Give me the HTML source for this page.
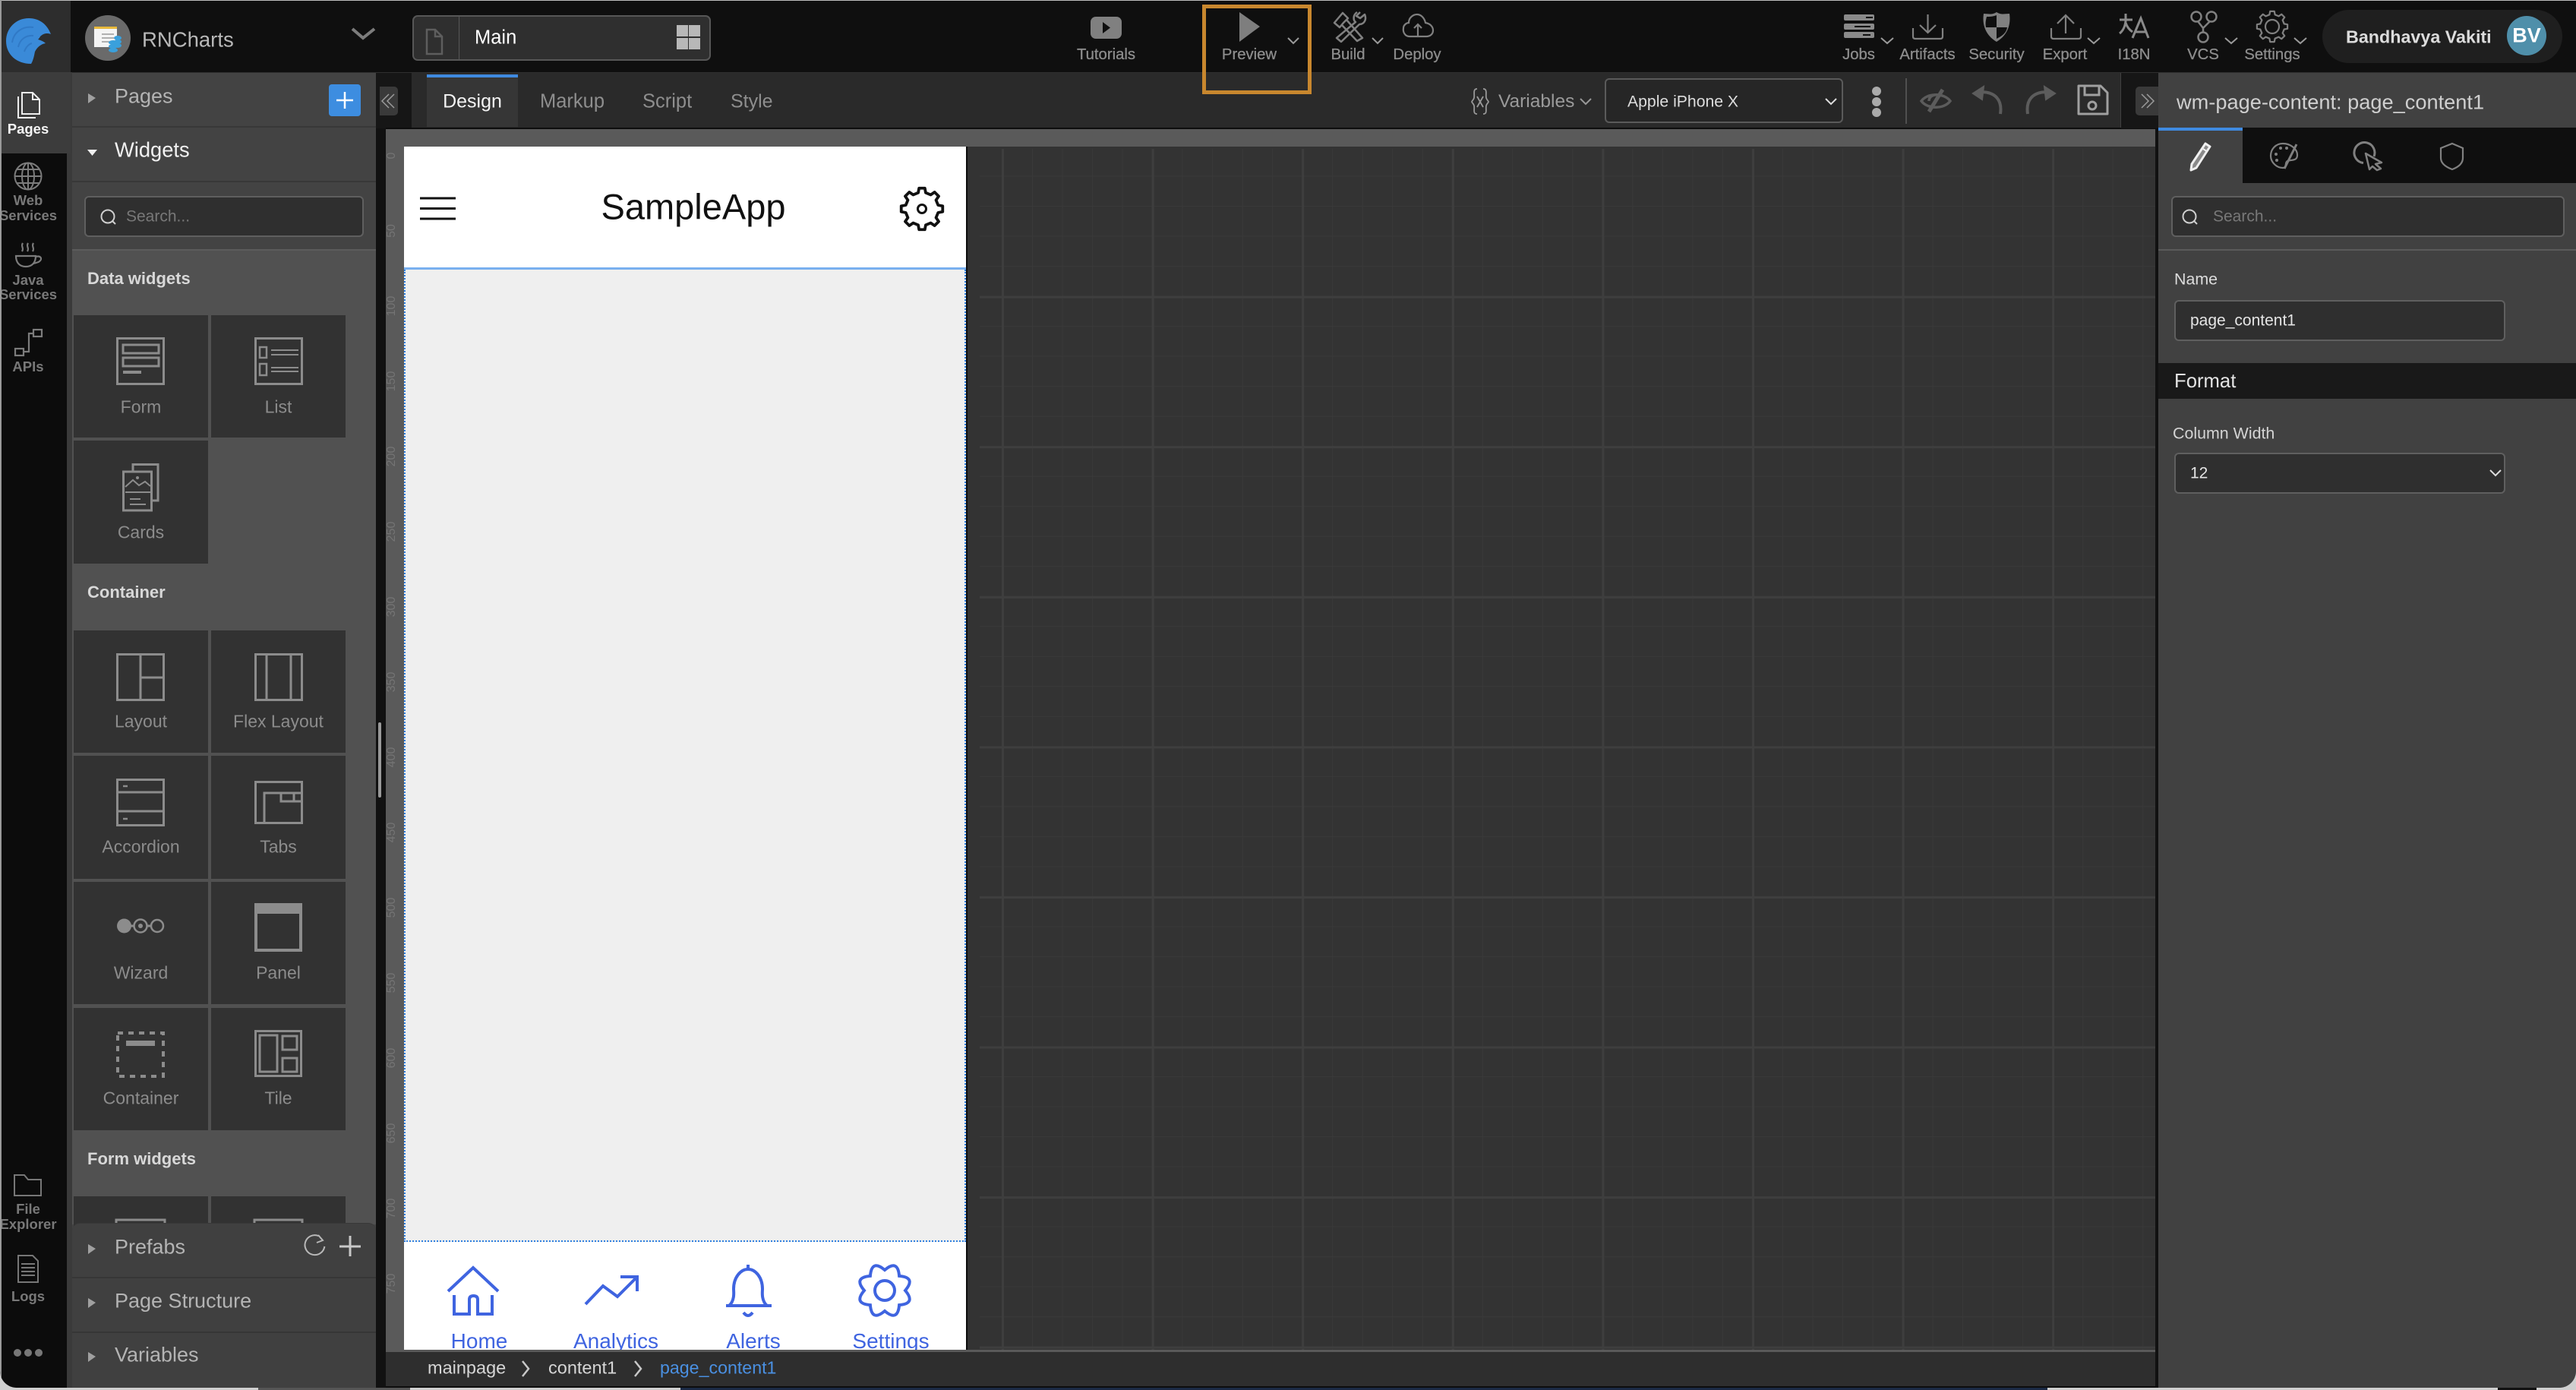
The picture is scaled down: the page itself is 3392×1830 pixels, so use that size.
<!DOCTYPE html>
<html><head><meta charset="utf-8"><title>RNCharts</title>
<style>
html,body{margin:0;padding:0;width:3392px;height:1830px;overflow:hidden;background:#cfcfcf;font-family:"Liberation Sans","Noto Sans CJK SC",sans-serif}
#root{position:absolute;left:0;top:0;width:3392px;height:1827px;overflow:hidden;background:#414141;border-radius:0 0 22px 22px}
.a{position:absolute}
.t,.c,.r{position:absolute;white-space:nowrap;line-height:1}
.t{transform:translateY(-50%)}
.c{transform:translate(-50%,-50%)}
.r{left:516px;font-size:16px;color:#747474;transform:translate(-50%,-50%) rotate(-90deg)}
.tile{position:absolute;background:#323232;width:177px}
.wl{font-size:23px;color:#8c8c8c}
.sh{font-size:22px;font-weight:bold;color:#d8d8d8;left:115px}
.tool{font-size:20.3px;color:#8c8c8c;-webkit-text-stroke:.3px #8c8c8c}
.rail{font-size:18.5px;font-weight:bold;color:#787878;left:37px}
.acc{font-size:27px;color:#b4b4b4;left:151px}
.nav{font-size:28px;color:#3f64e0}
svg{position:absolute;left:0;top:0}
</style></head><body>
<div id="root">
<!-- top bar -->
<div class="a" style="left:0;top:0;width:3392px;height:96px;background:#0f0f0f"></div>
<div class="a" style="left:0;top:0;width:93px;height:95px;background:#2d2d2d"></div>
<div class="a" style="left:0;top:95px;width:3392px;height:1px;background:#2f2f2f"></div>
<!-- rail -->
<div class="a" style="left:0;top:95px;width:88px;height:1732px;background:#0c0c0c"></div>
<div class="a" style="left:88px;top:95px;width:7px;height:1732px;background:#3a3a3a"></div>
<div class="a" style="left:0;top:95px;width:93px;height:107px;background:#3c3c3c"></div>
<!-- left panel -->
<div class="a" style="left:95px;top:96px;width:400px;height:1731px;background:#434343"></div>
<div class="a" style="left:95px;top:166px;width:400px;height:2px;background:#383838"></div>
<div class="a" style="left:95px;top:238px;width:400px;height:2px;background:#383838"></div>
<div class="a" style="left:95px;top:328px;width:400px;height:2px;background:#5c5c5c"></div>
<div class="a" style="left:95px;top:330px;width:400px;height:1282px;background:#515151"></div>
<div class="a" style="left:111px;top:258px;width:364px;height:50px;background:#2f2f2f;border:2px solid #5f5f5f;border-radius:6px"></div>
<div class="tile" style="left:97px;top:415px;height:161px"></div>
<div class="tile" style="left:278px;top:415px;height:161px"></div>
<div class="tile" style="left:97px;top:580px;height:162px"></div>
<div class="tile" style="left:97px;top:830px;height:161px"></div>
<div class="tile" style="left:278px;top:830px;height:161px"></div>
<div class="tile" style="left:97px;top:995px;height:162px"></div>
<div class="tile" style="left:278px;top:995px;height:162px"></div>
<div class="tile" style="left:97px;top:1161px;height:161px"></div>
<div class="tile" style="left:278px;top:1161px;height:161px"></div>
<div class="tile" style="left:97px;top:1327px;height:161px"></div>
<div class="tile" style="left:278px;top:1327px;height:161px"></div>
<div class="tile" style="left:97px;top:1575px;height:40px"></div>
<div class="tile" style="left:278px;top:1575px;height:40px"></div>
<div class="a" style="left:498px;top:951px;width:4px;height:99px;background:#999;border-radius:2px;z-index:3"></div>
<!-- bottom accordions -->
<div class="a" style="left:95px;top:1610px;width:400px;height:217px;background:#404040;border-radius:10px 10px 0 0;border-top:1px solid #383838;z-index:1"></div>
<div class="a" style="left:95px;top:1681px;width:400px;height:2px;background:#363636;z-index:1"></div>
<div class="a" style="left:95px;top:1753px;width:400px;height:2px;background:#363636;z-index:1"></div>
<!-- gutter -->
<div class="a" style="left:495px;top:96px;width:13px;height:1731px;background:#111"></div>
<div class="a" style="left:495px;top:96px;width:47px;height:73px;background:#161616"></div>
<!-- design toolbar -->
<div class="a" style="left:542px;top:96px;width:2250px;height:73px;background:#2a2a2a"></div>
<div class="a" style="left:508px;top:168px;width:2334px;height:2px;background:#0d0d0d"></div>
<div class="a" style="left:562px;top:98px;width:120px;height:69px;background:#363636"></div>
<div class="a" style="left:562px;top:98px;width:120px;height:4px;background:#3f8ae0"></div>
<div class="a" style="left:2793px;top:96px;width:49px;height:73px;background:#161616"></div>
<div class="a" style="left:500px;top:114px;width:24px;height:38px;background:#3a3a3a;border-radius:0 5px 5px 0"></div>
<div class="a" style="left:2812px;top:114px;width:30px;height:38px;background:#3a3a3a;border-radius:5px 0 0 5px"></div>
<!-- pill -->
<div class="a" style="left:543px;top:20px;width:389px;height:56px;background:#2f2f2f;border:2px solid #575757;border-radius:7px"></div>
<div class="a" style="left:604px;top:22px;width:1px;height:56px;background:#575757"></div>
<!-- select -->
<div class="a" style="left:2113px;top:103px;width:310px;height:55px;background:#262626;border:2px solid #5a5a5a;border-radius:6px"></div>
<div class="a" style="left:2509px;top:103px;width:2px;height:60px;background:#505050"></div>
<!-- canvas -->
<div class="a" style="left:508px;top:170px;width:2330px;height:23px;background:#5a5a5a"></div>
<div class="a" style="left:508px;top:170px;width:24px;height:1608px;background:#5a5a5a"></div>
<div class="a" style="left:1272px;top:193px;width:1566px;height:1585px;background-color:#333;background-image:linear-gradient(to right,#3e3e3e 3px,transparent 3px),linear-gradient(to bottom,#3e3e3e 3px,transparent 3px),linear-gradient(to right,#393939 1px,transparent 1px),linear-gradient(to bottom,#393939 1px,transparent 1px);background-size:197.6px 197.6px,197.6px 197.6px,39.52px 39.52px,39.52px 39.52px;background-position:47px 0,0 -1px,8px 0,0 -1px"></div>
<div class="a" style="left:1272px;top:193px;width:18px;height:1585px;background:#333"></div>
<div class="a" style="left:1272px;top:193px;width:1566px;height:3px;background:#333"></div>
<div class="a" style="left:2838px;top:170px;width:4px;height:1657px;background:#111"></div>
<!-- phone -->
<div class="a" style="left:532px;top:193px;width:740px;height:1584px;background:#fff"></div>
<div class="a" style="left:1272px;top:193px;width:2px;height:1584px;background:#0c0c0c"></div>
<div class="a" style="left:532px;top:352px;width:740px;height:3px;background:#79b0ef"></div>
<div class="a" style="left:532px;top:355px;width:736px;height:1278px;background:#efefef;border-left:2px dotted #2f7fe0;border-right:2px dotted #2f7fe0;border-bottom:2px dotted #2f7fe0"></div>
<!-- breadcrumb -->
<div class="a" style="left:508px;top:1777px;width:2330px;height:3px;background:#5a5a5a"></div>
<div class="a" style="left:508px;top:1780px;width:2330px;height:46px;background:#2e2e2e"></div>
<div class="a" style="left:508px;top:1825px;width:2334px;height:2px;background:#0d0d0d"></div>
<!-- right panel -->
<div class="a" style="left:2842px;top:96px;width:550px;height:1731px;background:#414141"></div>
<div class="a" style="left:2842px;top:168px;width:550px;height:73px;background:#0f0f0f"></div>
<div class="a" style="left:2842px;top:168px;width:111px;height:73px;background:#414141"></div>
<div class="a" style="left:2842px;top:168px;width:111px;height:4px;background:#3f8ae0"></div>
<div class="a" style="left:2859px;top:258px;width:514px;height:50px;background:#2f2f2f;border:2px solid #5f5f5f;border-radius:6px"></div>
<div class="a" style="left:2842px;top:328px;width:550px;height:2px;background:#5a5a5a"></div>
<div class="a" style="left:2863px;top:395px;width:432px;height:50px;background:#2f2f2f;border:2px solid #5f5f5f;border-radius:6px"></div>
<div class="a" style="left:2842px;top:478px;width:550px;height:47px;background:#191919"></div>
<div class="a" style="left:2863px;top:596px;width:432px;height:50px;background:#2f2f2f;border:2px solid #5f5f5f;border-radius:6px"></div>
<!-- user pill -->
<div class="a" style="left:3058px;top:13px;width:316px;height:70px;background:#1f1f1f;border-radius:35px"></div>
<div class="a" style="left:3301px;top:21px;width:52px;height:52px;background:#4f8faa;border-radius:50%"></div>
<!-- edges -->
<div class="a" style="left:0;top:0;width:3392px;height:1px;background:#bdbdbd;z-index:5"></div>
<div class="a" style="left:0;top:0;width:2px;height:1827px;background:#9a9a9a;z-index:5"></div>

<!-- ICONS -->
<svg width="3392" height="1830" viewBox="0 0 3392 1830" fill="none" style="z-index:2">
<defs>
<polygon id="gear" points="22.4,-5.2 28.7,-4 28.7,4 22.4,5.2 19.5,12.2 23.2,17.5 17.5,23.2 12.2,19.5 5.2,22.4 4,28.7 -4,28.7 -5.2,22.4 -12.2,19.5 -17.5,23.2 -23.2,17.5 -19.5,12.2 -22.4,5.2 -28.7,4 -28.7,-4 -22.4,-5.2 -19.5,-12.2 -23.2,-17.5 -17.5,-23.2 -12.2,-19.5 -5.2,-22.4 -4,-28.7 4,-28.7 5.2,-22.4 12.2,-19.5 17.5,-23.2 23.2,-17.5 19.5,-12.2"/>
</defs>
<!-- logo -->
<path d="M38 24C52 24 62 32 67 45C62 43 57 44 53 48C52 50 51 51 50 52C54 53 58 55 60 57C54 58 49 62 46 68C45 73 44 79 41 84C22 84 8 72 8 54C8 37 21 24 38 24Z" fill="#3a8ad8"/>
<path d="M16 56C18 42 30 34 44 36M24 62C26 52 34 46 44 47M32 68C34 62 38 58 42 57" stroke="#3079c6" stroke-width="2"/>
<!-- app icon -->
<circle cx="142" cy="50" r="30" fill="#6a6a6a"/>
<rect x="124" y="35" width="30" height="27" fill="#f4f4f4"/>
<rect x="124" y="35" width="30" height="3" fill="#e8b93c"/>
<path d="M134 45h16M134 50h16M134 55h10" stroke="#999" stroke-width="1.5"/>
<g fill="#3aa0dc"><ellipse cx="149" cy="56" rx="6" ry="3"/><ellipse cx="149" cy="61" rx="6" ry="3"/><ellipse cx="149" cy="66" rx="6" ry="3"/><ellipse cx="155" cy="50" rx="5" ry="3"/><ellipse cx="155" cy="55" rx="5" ry="3"/><ellipse cx="155" cy="60" rx="5" ry="3"/></g>
<path d="M464 38L478 50L493 38" stroke="#7c7c7c" stroke-width="4"/>
<!-- rail icons -->
<path d="M29 122H43L52 131V150H29Z" stroke="#eee" stroke-width="2"/><path d="M43 122V131H52" stroke="#eee" stroke-width="2"/><path d="M24 127V155H47" stroke="#eee" stroke-width="2"/>
<g stroke="#7c7c7c" stroke-width="2"><circle cx="37" cy="232" r="17.5"/><ellipse cx="37" cy="232" rx="8" ry="17.5"/><path d="M19.5 232H54.5M22 223H52M22 241H52M37 214V250"/></g>
<g stroke="#7c7c7c" stroke-width="2.2"><path d="M21 337H47C47 346 42 351 34 351C26 351 21 346 21 337ZM47 338C54 336 56 341 52 344C50 346 46 346 44 347"/><path d="M30 320C27 325 32 326 29 331M37 320C34 325 39 326 36 331M44 320C41 325 46 326 43 331"/></g>
<g stroke="#7c7c7c" stroke-width="2.2"><rect x="20" y="459" width="11" height="9"/><rect x="44" y="434" width="11" height="9"/><path d="M31 463H38V439H44"/></g>
<path d="M19 1574V1547H32L37 1553H54V1574Z" stroke="#777" stroke-width="2"/>
<path d="M24 1653H43L50 1660V1688H24Z M28 1664H46M28 1669H46M28 1674H46M28 1679H46" stroke="#777" stroke-width="2"/>
<g fill="#777"><circle cx="23" cy="1781" r="5"/><circle cx="37" cy="1781" r="5"/><circle cx="51" cy="1781" r="5"/></g>
<!-- panel triangles -->
<g fill="#a0a0a0"><path d="M116 123L126 129L116 136Z"/><path d="M116 1638L126 1644L116 1651Z"/><path d="M116 1709L126 1715L116 1722Z"/><path d="M116 1780L126 1786L116 1793Z"/></g>
<path d="M115 197H128L121.5 205Z" fill="#f0f0f0"/>
<rect x="433" y="111" width="42" height="42" rx="4" fill="#3d8de0"/>
<path d="M443 132H465M454 121V143" stroke="#fff" stroke-width="2.5"/>
<g stroke="#cfcfcf" stroke-width="2"><circle cx="142" cy="285" r="8.5"/><path d="M148 291L152 295"/><circle cx="2883" cy="285" r="8.5"/><path d="M2889 291L2893 295"/></g>
<path d="M425 1632A13 13 0 1 0 425 1648" stroke="#b8b8b8" stroke-width="2" transform="rotate(-30 413 1640)"/>
<path d="M419 1626L425 1633L417 1636" stroke="#b8b8b8" stroke-width="2"/>
<path d="M447 1641H475M461 1627V1654" stroke="#c8c8c8" stroke-width="3"/>
<!-- chevrons left/right collapse -->
<path d="M512 124L503 133L512 142M519 124L510 133L519 142" stroke="#9a9a9a" stroke-width="1.5"/>
<path d="M2820 124L2829 133L2820 142M2827 124L2836 133L2827 142" stroke="#9a9a9a" stroke-width="1.5"/>
<!-- tiles -->
<g stroke="#8c8c8c" stroke-width="3" fill="none">
<g transform="translate(153 444)"><rect x="1.5" y="1.5" width="61" height="60"/><rect x="9" y="10" width="47" height="11"/><rect x="9" y="27" width="47" height="11"/><path d="M9 46H33" stroke-width="4"/></g>
<g transform="translate(335 444)"><rect x="1.5" y="1.5" width="61" height="60"/><rect x="7" y="13" width="9" height="14" stroke-width="2.5"/><rect x="7" y="35" width="9" height="15" stroke-width="2.5"/><path d="M22 17H58M22 23H58M22 40H58M22 45H58" stroke-width="2"/></g>
<g transform="translate(161 610)"><path d="M14 11V1.5H47V49H38"/><rect x="1.5" y="11" width="37" height="51"/><path d="M4 38H37M4 31L14 22L22 29L30 24L37 30" stroke-width="2"/><path d="M10 47H24M10 54H31" stroke-width="2"/><circle cx="20" cy="19" r="2" fill="#8c8c8c" stroke="none"/></g>
<g transform="translate(153 860)"><rect x="1.5" y="1.5" width="61" height="60"/><path d="M32 1.5V61M32 32H62"/></g>
<g transform="translate(335 860)"><rect x="1.5" y="1.5" width="61" height="60"/><path d="M16 1.5V61M48 1.5V61"/></g>
<g transform="translate(153 1025)"><rect x="1.5" y="1.5" width="61" height="60"/><path d="M1.5 18H62M1.5 43H62"/><path d="M9 10H15M9 53H15" stroke-width="2.5"/></g>
<g transform="translate(335 1028)"><rect x="1.5" y="1.5" width="61" height="54"/><path d="M13 55V16H35V27H62M35 16H62M52 16V27"/></g>
<g><path d="M172 1219H176M194 1219H199"/><circle cx="163.5" cy="1219" r="9.5" fill="#8c8c8c" stroke="none"/><circle cx="185" cy="1219" r="8.5" stroke-width="2.5"/><circle cx="185" cy="1219" r="3" fill="#8c8c8c" stroke="none"/><circle cx="207" cy="1219" r="8" stroke-width="2.5"/></g>
<g transform="translate(335 1189)"><rect x="2" y="2" width="59" height="60" stroke-width="4"/><rect x="0" y="0" width="63" height="14" fill="#8c8c8c" stroke="none"/></g>
<g transform="translate(153 1358)"><rect x="2" y="2" width="60" height="57" stroke-width="4" stroke-dasharray="7 7"/><rect x="13" y="12" width="38" height="7" fill="#8c8c8c" stroke="none"/></g>
<g transform="translate(335 1356)"><rect x="1.5" y="1.5" width="60" height="59"/><rect x="7" y="7" width="23" height="48"/><rect x="37" y="8" width="19" height="18"/><rect x="37" y="37" width="19" height="18"/></g>
<path d="M153 1610V1606H217V1610M335 1610V1606H398V1610"/>
</g>
<!-- pill page icon + grid -->
<path d="M562 39H573L582 48V71H562ZM573 39V48H582" stroke="#5e5e5e" stroke-width="2.5"/>
<g fill="#b8b8b8"><rect x="891" y="33" width="15" height="15"/><rect x="907" y="33" width="15" height="15"/><rect x="891" y="50" width="15" height="15"/><rect x="907" y="50" width="15" height="15"/></g>
<!-- tutorial -->
<rect x="1436" y="22" width="41" height="29" rx="7" fill="#808080"/><path d="M1452 29L1462 36.5L1452 44Z" fill="#0f0f0f"/>
<!-- preview -->
<rect x="1585.5" y="8.5" width="139" height="113" stroke="#c8872e" stroke-width="5"/>
<path d="M1632 16L1659 35L1632 55Z" fill="#7e7e7e"/>
<g stroke="#9a9a9a" stroke-width="2"><path d="M1696 50L1703 57L1710 50M1807 50L1814 57L1821 50M2477 50L2485 57L2493 50M2749 50L2757 57L2765 50M2930 50L2938 57L2946 50M3021 50L3029 57L3037 50"/></g>
<!-- build -->
<g stroke="#808080" stroke-width="2.5" stroke-linejoin="round"><path d="M1757 30L1768 17L1775 24L1769 30L1764 36ZM1766 32L1787 54L1794 50L1773 26"/><path d="M1787 16C1781 20 1782 27 1785 29L1760 50L1766 55L1790 32C1796 32 1800 26 1797 19L1791 24L1786 21L1791 16"/></g>
<!-- deploy -->
<g stroke="#808080" stroke-width="2.2"><path d="M1856 48C1850 48 1847 42 1848 37C1848 33 1852 30 1855 30C1855 23 1861 19 1866 19C1872 19 1876 25 1877 30C1883 31 1887 35 1887 40C1887 45 1883 48 1878 48Z"/><path d="M1867 47V32M1862 37L1867 32L1872 37"/></g>
<!-- variables -->
<path d="M1945 117C1939 117 1942 124 1941 129C1940 132 1938 133 1938 134C1938 135 1940 136 1941 139C1942 144 1939 150 1945 150M1953 117C1959 117 1956 124 1957 129C1958 132 1960 133 1960 134C1960 135 1958 136 1957 139C1956 144 1959 150 1953 150M1945 127L1953 141M1953 127L1945 141" stroke="#999" stroke-width="1.8"/>
<path d="M2081 130L2088 137L2095 130" stroke="#999" stroke-width="2"/>
<path d="M2404 130L2411 137L2418 130" stroke="#ddd" stroke-width="2"/>
<!-- dots -->
<g fill="#aaa"><circle cx="2471" cy="120" r="6"/><circle cx="2471" cy="134" r="6"/><circle cx="2471" cy="148" r="6"/></g>
<!-- eye/undo/redo/save -->
<g stroke="#5c5c5c" stroke-width="3.5"><path d="M2530 133C2538 122 2560 122 2568 133C2560 144 2538 144 2530 133Z"/><path d="M2558 118L2540 147" stroke-width="5"/><path d="M2540 133C2540 127 2546 124 2552 125"/></g>
<path d="M2602 122C2625 118 2637 130 2634 150" stroke="#5c5c5c" stroke-width="4"/><path d="M2598 123L2612 114L2610 131Z" fill="#5c5c5c" stroke="#5c5c5c" stroke-width="2"/>
<path d="M2702 122C2679 118 2667 130 2670 150" stroke="#5c5c5c" stroke-width="4"/><path d="M2706 123L2692 114L2694 131Z" fill="#5c5c5c" stroke="#5c5c5c" stroke-width="2"/>
<g stroke="#a0a0a0" stroke-width="3"><path d="M2737 113H2766L2775 122V150H2737Z" stroke-linejoin="round"/><path d="M2745 113V125H2764V113"/><circle cx="2755" cy="139" r="5"/></g>
<!-- jobs -->
<g fill="#8a8a8a"><rect x="2428" y="19" width="40" height="8" rx="2"/><rect x="2428" y="31" width="40" height="8" rx="2"/><rect x="2428" y="42" width="40" height="8" rx="2"/></g>
<path d="M2457 23H2466M2442 35H2463M2453 46H2463" stroke="#0f0f0f" stroke-width="2"/>
<g stroke="#808080" stroke-width="2.2"><path d="M2519 37V48Q2519 51 2522 51H2555Q2558 51 2558 48V37M2538.5 19V43M2528 33L2538.5 43L2549 33"/>
<path d="M2701 37V48Q2701 51 2704 51H2737Q2740 51 2740 48V37M2720 20V44M2709 31L2720 20L2731 31"/></g>
<!-- shield -->
<path d="M2612 18C2618 18 2623 20 2629 16C2635 20 2640 18 2646 18C2648 32 2644 46 2629 55C2614 46 2610 32 2612 18Z" fill="#808080"/>
<path d="M2616 22C2620 22 2624 22 2629 20V36H2615C2614 30 2615 26 2616 22ZM2629 36H2643C2642 43 2637 47 2629 51Z" fill="#0f0f0f"/>
<!-- I18N -->
<g stroke="#8a8a8a" stroke-width="3"><path d="M2791 26H2808M2799 18V28C2798 36 2795 41 2791 44M2799 30C2801 36 2805 40 2808 42"/><path d="M2808 50L2819 24L2829 50M2812 42H2826"/></g>
<!-- VCS -->
<g stroke="#808080" stroke-width="2.5"><circle cx="2892" cy="22" r="6.5"/><circle cx="2912" cy="22" r="6.5"/><circle cx="2901" cy="49" r="6.5"/><path d="M2894 28L2901 37L2910 28M2901 37V43"/></g>
<!-- settings gear -->
<use href="#gear" transform="translate(2992 35) scale(.7)" stroke="#808080" stroke-width="3.2" stroke-linejoin="round"/>
<circle cx="2992" cy="35" r="9" stroke="#808080" stroke-width="2.2"/>
<!-- right tab icons -->
<path d="M2904 189L2910 193L2892 221L2885 224L2886 216Z" stroke="#f0f0f0" stroke-width="3" stroke-linejoin="round" fill="#8a8a8a"/><path d="M2901 196L2907 200" stroke="#f0f0f0" stroke-width="2"/>
<g stroke="#808080" stroke-width="2.2"><path d="M3006 189C2996 189 2990 197 2990 205C2990 214 2998 221 3006 221C3012 221 3008 214 3012 212C3018 210 3025 212 3025 204C3025 196 3016 189 3006 189Z"/><path d="M3024 190L3008 222" stroke-width="3"/></g>
<g fill="#808080"><circle cx="3003" cy="195" r="2"/><circle cx="2997" cy="203" r="2"/><circle cx="2998" cy="211" r="2"/><circle cx="3011" cy="195" r="2"/></g>
<path d="M3126 206A13.5 13.5 0 1 0 3112 214.500" stroke="#808080" stroke-width="3"/><path d="M3115 202L3136 214L3128 216L3135 222L3130 224L3124 219L3120 223Z" stroke="#808080" stroke-width="2.5" stroke-linejoin="round" fill="#0f0f0f"/>
<path d="M3229 189L3243 195V208C3243 215 3237 220 3229 223C3221 220 3214 215 3214 208V195Z" stroke="#808080" stroke-width="2.2"/>
<path d="M3279 619L3286 626L3293 619" stroke="#ddd" stroke-width="2"/>
<!-- phone header -->
<path d="M553 261H600M553 274.5H600M553 288H600" stroke="#111" stroke-width="3"/>
<use href="#gear" transform="translate(1214 275) scale(.95)" stroke="#111" stroke-width="4" stroke-linejoin="round"/>
<circle cx="1214" cy="275" r="5.5" stroke="#111" stroke-width="3"/>
<!-- phone nav -->
<g stroke="#3f64e0" stroke-width="4">
<path d="M590 1700L623 1669L656 1700"/>
<path d="M598 1705V1730H618V1711Q618 1706 623.5 1706Q629 1706 629 1711V1730H648V1705"/>
<path d="M771 1717L794 1693L813 1707L839 1681M817 1681H839V1700"/>
<path d="M985 1665V1671M960 1719C968 1712 966 1700 966 1697C966 1682 975 1671 985 1671C995 1671 1004 1682 1004 1697C1004 1700 1002 1712 1010 1719M956 1719H1016M979 1728Q985 1736 991 1728"/>
<path transform="translate(1165 1699)" d="M27 0Q41.6 17.2 19.1 19.1Q17.2 41.6 0 27Q-17.2 41.6 -19.1 19.1Q-41.6 17.2 -27 0Q-41.6 -17.2 -19.1 -19.1Q-17.2 -41.6 0 -27Q17.2 -41.6 19.1 -19.1Q41.6 -17.2 27 0Z"/>
<circle cx="1165" cy="1699" r="13"/>
</g>
<path d="M688 1792L696 1802L688 1812M836 1792L844 1802L836 1812" stroke="#c8c8c8" stroke-width="2.5"/>
</svg>

<!-- TEXT -->
<div style="position:absolute;left:0;top:0;z-index:3">
<span class="t" style="left:187px;top:52px;font-size:27.5px;color:#b8b8b8">RNCharts</span>
<span class="t" style="left:625px;top:50px;font-size:25.5px;color:#fff">Main</span>

<span class="c rail" style="top:170px;color:#f4f4f4">Pages</span>
<span class="c rail" style="top:264px">Web</span><span class="c rail" style="top:284px">Services</span>
<span class="c rail" style="top:369px">Java</span><span class="c rail" style="top:388px">Services</span>
<span class="c rail" style="top:483px">APIs</span>
<span class="c rail" style="top:1592px">File</span><span class="c rail" style="top:1612px">Explorer</span>
<span class="c rail" style="top:1707px">Logs</span>

<span class="t acc" style="top:127px">Pages</span>
<span class="t acc" style="top:197px;color:#f2f2f2;font-size:27.3px">Widgets</span>
<span class="t" style="left:166px;top:285px;font-size:21px;color:#787878">Search...</span>
<span class="t sh" style="top:367px">Data widgets</span>
<span class="t sh" style="top:780px">Container</span>
<span class="t sh" style="top:1526px">Form widgets</span>

<span class="c wl" style="left:185.5px;top:536px">Form</span>
<span class="c wl" style="left:366.5px;top:536px">List</span>
<span class="c wl" style="left:185.5px;top:701px">Cards</span>
<span class="c wl" style="left:185.5px;top:950px">Layout</span>
<span class="c wl" style="left:366.5px;top:950px">Flex Layout</span>
<span class="c wl" style="left:185.5px;top:1115px">Accordion</span>
<span class="c wl" style="left:366.5px;top:1115px">Tabs</span>
<span class="c wl" style="left:185.5px;top:1281px">Wizard</span>
<span class="c wl" style="left:366.5px;top:1281px">Panel</span>
<span class="c wl" style="left:185.5px;top:1446px">Container</span>
<span class="c wl" style="left:366.5px;top:1446px">Tile</span>

<span class="t acc" style="top:1642px">Prefabs</span>
<span class="t acc" style="top:1713px">Page Structure</span>
<span class="t acc" style="top:1784px">Variables</span>

<span class="c" style="left:622px;top:134px;font-size:25px;color:#f4f4f4">Design</span>
<span class="t" style="left:711px;top:134px;font-size:25.5px;color:#8e8e8e">Markup</span>
<span class="t" style="left:846px;top:134px;font-size:25.5px;color:#8e8e8e">Script</span>
<span class="t" style="left:962px;top:134px;font-size:25px;color:#8e8e8e">Style</span>

<span class="c tool" style="left:1456.5px;top:72px">Tutorials</span>
<span class="c tool" style="left:1645px;top:72px">Preview</span>
<span class="c tool" style="left:1775px;top:72px">Build</span>
<span class="c tool" style="left:1866px;top:72px">Deploy</span>
<span class="c tool" style="left:2447.5px;top:72px">Jobs</span>
<span class="c tool" style="left:2538px;top:72px">Artifacts</span>
<span class="c tool" style="left:2629px;top:72px">Security</span>
<span class="c tool" style="left:2719px;top:72px">Export</span>
<span class="c tool" style="left:2810px;top:72px">I18N</span>
<span class="c tool" style="left:2901px;top:72px">VCS</span>
<span class="c tool" style="left:2992px;top:72px">Settings</span>

<span class="t" style="left:1973px;top:134px;font-size:24.5px;color:#9a9a9a">Variables</span>
<span class="t" style="left:2143px;top:134px;font-size:21.2px;color:#ddd">Apple iPhone X</span>
<span class="t" style="left:3089px;top:49px;font-size:23.3px;font-weight:bold;color:#dcdcdc">Bandhavya Vakiti</span>
<span class="c" style="left:3327px;top:47px;font-size:27px;font-weight:bold;color:#fff">BV</span>

<span class="t" style="left:2866px;top:134px;font-size:27.2px;color:#cfcfcf">wm-page-content: page_content1</span>
<span class="t" style="left:2914px;top:285px;font-size:21px;color:#787878">Search...</span>
<span class="t" style="left:2863px;top:368px;font-size:21.4px;color:#dcdcdc">Name</span>
<span class="t" style="left:2884px;top:422px;font-size:21px;color:#e4e4e4">page_content1</span>
<span class="t" style="left:2863px;top:503px;font-size:25.7px;color:#e4e4e4">Format</span>
<span class="t" style="left:2861px;top:571px;font-size:21.4px;color:#d4d4d4">Column Width</span>
<span class="t" style="left:2884px;top:623px;font-size:21px;color:#e4e4e4">12</span>

<span class="c" style="left:913px;top:272px;font-size:47px;color:#111">SampleApp</span>
<div class="a" style="left:532px;top:1740px;width:740px;height:37px;overflow:hidden">
<span class="c nav" style="left:99px;top:26px">Home</span>
<span class="c nav" style="left:279px;top:26px">Analytics</span>
<span class="c nav" style="left:460px;top:26px">Alerts</span>
<span class="c nav" style="left:641px;top:26px">Settings</span>
</div>

<span class="t" style="left:563px;top:1801px;font-size:23.5px;color:#d6d6d6">mainpage</span>
<span class="t" style="left:722px;top:1801px;font-size:23.5px;color:#d6d6d6">content1</span>
<span class="t" style="left:869px;top:1801px;font-size:23.2px;color:#4a90e2">page_content1</span>

<span class="r" style="top:205px">0</span><span class="r" style="top:304px">50</span><span class="r" style="top:403px">100</span><span class="r" style="top:502px">150</span><span class="r" style="top:601px">200</span><span class="r" style="top:700px">250</span><span class="r" style="top:799px">300</span><span class="r" style="top:898px">350</span><span class="r" style="top:997px">400</span><span class="r" style="top:1096px">450</span><span class="r" style="top:1195px">500</span><span class="r" style="top:1294px">550</span><span class="r" style="top:1393px">600</span><span class="r" style="top:1492px">650</span><span class="r" style="top:1591px">700</span><span class="r" style="top:1690px">750</span>
</div>
</div>
<!-- below window -->
<div class="a" style="left:896px;top:1827px;width:1800px;height:3px;background:#1b2a45"></div>
<div class="a" style="left:340px;top:1827px;width:200px;height:3px;background:#555"></div>
<div class="a" style="left:3289px;top:1827px;width:51px;height:3px;background:#111"></div>
</body></html>
